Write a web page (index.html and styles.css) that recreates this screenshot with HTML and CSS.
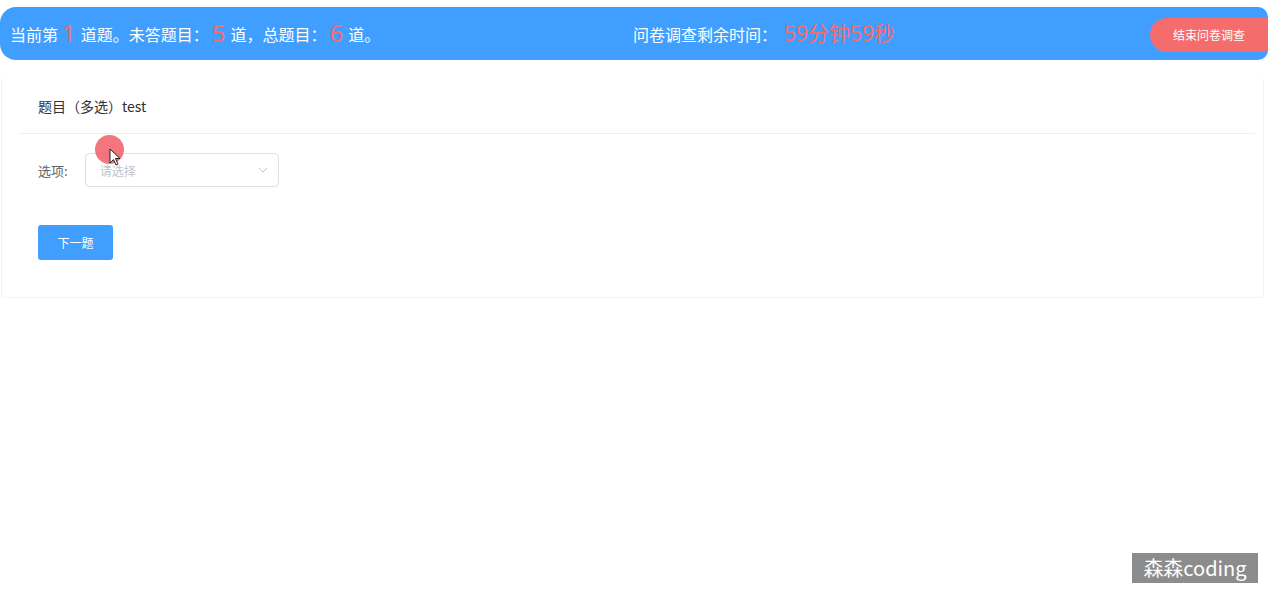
FILE: index.html
```html
<!DOCTYPE html>
<html lang="zh">
<head>
<meta charset="utf-8">
<link rel="stylesheet" href="styles.css">
</head>
<body>
<div class="page">
  <div class="topbar">
    <div class="progress">当前第<span class="num">1</span>道题。未答题目：<span class="num gap">5</span>道，总题目：<span class="num gap">6</span>道。</div>
    <div class="timer">问卷调查剩余时间：<span class="time">59分钟59秒</span></div>
    <button class="end-btn">结束问卷调查</button>
  </div>
  <div class="card">
    <div class="card-head">题目（多选）test</div>
    <div class="card-body">
      <div class="form-row">
        <label class="label">选项:</label>
        <div class="select">
          <span class="placeholder">请选择</span>
          <svg class="arrow" width="12" height="12" viewBox="0 0 12 12"><path d="M2 4 L6 8 L10 4" fill="none" stroke="#c0c4cc" stroke-width="1"/></svg>
        </div>
      </div>
      <button class="next-btn">下一题</button>
    </div>
  </div>
</div>
<div class="cursor-dot"></div>
<svg class="cursor" width="14" height="20" viewBox="0 0 14 20"><path d="M1 1 L1 15 L4.5 11.5 L7 17 L9 16 L6.5 10.5 L11 10.5 Z" fill="#fff" stroke="#222" stroke-width="1"/></svg>
<div class="watermark">森森coding</div>
</body>
</html>
```
FILE: styles.css
```css
html, body {
  margin: 0;
  padding: 0;
  background: #fff;
}
body {
  font-family: "Noto Sans CJK SC", "Noto Sans", sans-serif;
  color: #303133;
  width: 1268px;
  height: 599px;
  overflow: hidden;
  position: relative;
}
.page {
  padding-top: 7px;
}
.topbar {
  height: 53px;
  background: #409eff;
  border-radius: 16px 10px 10px 16px;
  display: grid;
  grid-template-columns: 623px 1fr auto;
  align-items: center;
  padding-left: 10px;
  color: #fff;
  font-size: 16px;
  box-sizing: border-box;
}
.progress, .timer {
  white-space: nowrap;
  line-height: 24px;
}
.num {
  font-family: "Noto Sans", "Noto Sans CJK SC", sans-serif;
  color: #f56c6c;
  font-size: 24px;
  margin: 0 5px 0 4px;
  vertical-align: -1px;
}
.num.gap { margin-left: 3px; }
.time {
  font-family: "Noto Sans", "Noto Sans CJK SC", sans-serif;
  color: #f56c6c;
  font-size: 21px;
  margin-left: 7px;
}
.end-btn {
  width: 118px;
  height: 34px;
  border: none;
  border-radius: 17px 0 0 17px;
  background: #f56c6c;
  color: #fff;
  font-family: inherit;
  font-size: 12px;
  padding: 0;
  margin-top: 2px;
}
.card {
  margin: 18px 4px 0 1px;
  border: 1px solid #f2f3f6;
  border-top: none;
  border-radius: 4px;
}
.card-head {
  margin: 0 8px 0 16px;
  padding: 18px 0 17px 20px;
  font-size: 14px;
  line-height: 20px;
  border-bottom: 1px solid #eef0f4;
}
.card-body {
  padding: 19px 20px 37px 36px;
}
.form-row {
  display: flex;
  align-items: center;
  gap: 17px;
}
.label {
  font-size: 13px;
  color: #606266;
}
.select {
  width: 194px;
  height: 34px;
  border: 1px solid #dcdfe6;
  border-radius: 4px;
  box-sizing: border-box;
  display: flex;
  align-items: center;
  justify-content: space-between;
  padding: 0 9px 0 14px;
}
.placeholder {
  font-size: 12px;
  color: #c0c4cc;
}
.next-btn {
  margin-top: 38px;
  width: 75px;
  height: 35px;
  background: #409eff;
  border: none;
  border-radius: 3px;
  color: #fff;
  font-family: inherit;
  font-size: 12px;
  padding: 0;
  display: block;
}
.cursor-dot {
  position: absolute;
  left: 95px;
  top: 135px;
  width: 29px;
  height: 29px;
  border-radius: 50%;
  background: rgba(240, 80, 90, 0.78);
}
.cursor {
  position: absolute;
  left: 109px;
  top: 148px;
}
.watermark {
  position: absolute;
  left: 1132px;
  top: 553px;
  width: 126px;
  height: 30px;
  background: #8c8c8c;
  color: #fff;
  font-size: 20px;
  line-height: 30px;
  text-align: center;
}
```
